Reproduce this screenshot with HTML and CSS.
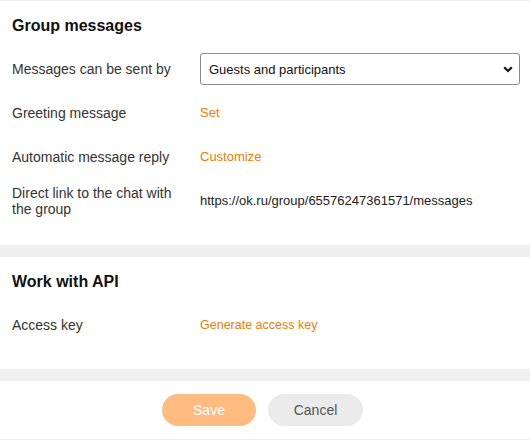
FILE: index.html
```
<!DOCTYPE html>
<html>
<head>
<meta charset="utf-8">
<link rel="stylesheet" href="styles.css">
</head>
<body>
<div class="page">
  <section class="card">
    <h2 class="title">Group messages</h2>
    <div class="rows">
      <div class="row">
        <div class="label">Messages can be sent by</div>
        <div class="value">
          <div class="select-wrap">
            <select class="select">
              <option>Guests and participants</option>
            </select>
            <svg class="chevron" width="10" height="7" viewBox="0 0 10 7"><path d="M1.2 1.2 L5 5 L8.8 1.2" fill="none" stroke="#111" stroke-width="2.2"/></svg>
          </div>
        </div>
      </div>
      <div class="row">
        <div class="label">Greeting message</div>
        <div class="value"><a class="link">Set</a></div>
      </div>
      <div class="row">
        <div class="label">Automatic message reply</div>
        <div class="value"><a class="link">Customize</a></div>
      </div>
      <div class="row">
        <div class="label">Direct link to the chat with the group</div>
        <div class="value url">https://ok.ru/group/65576247361571/messages</div>
      </div>
    </div>
  </section>
  <div class="band"></div>
  <section class="card">
    <h2 class="title">Work with API</h2>
    <div class="rows">
      <div class="row">
        <div class="label">Access key</div>
        <div class="value"><a class="link link-narrow">Generate access key</a></div>
      </div>
    </div>
  </section>
  <div class="band"></div>
  <footer class="footer">
    <button class="btn btn-save">Save</button>
    <button class="btn btn-cancel">Cancel</button>
  </footer>
</div>
</body>
</html>
```
FILE: styles.css
```
html, body {
  margin: 0;
  padding: 0;
  background: #fff;
}
body {
  font-family: "Liberation Sans", Arial, sans-serif;
  font-size: 13px;
  color: #333;
}
.page {
  width: 530px;
  border-top: 1px solid #efefef;
}
.card {
  padding: 15px 12px 28px 12px;
}
.title {
  margin: 0 0 17px 0;
  font-size: 16px;
  line-height: 20px;
  font-weight: bold;
  color: #111;
}
.rows {
  display: flex;
  flex-direction: column;
  gap: 12px;
}
.row {
  display: flex;
  align-items: center;
  min-height: 32px;
}
.label {
  width: 188px;
  flex: none;
  box-sizing: border-box;
  padding-right: 12px;
  font-size: 14px;
  line-height: 16px;
  color: #333;
}
.value {
  flex: 1;
  line-height: 16px;
}
.url {
  font-size: 13px;
  color: #222;
}
.link {
  color: #f07d00;
  cursor: pointer;
}
.link-narrow {
  font-size: 12.5px;
}
.select-wrap {
  position: relative;
  width: 320px;
}
.select {
  appearance: none;
  -webkit-appearance: none;
  display: block;
  width: 100%;
  height: 32px;
  margin: 0;
  box-sizing: border-box;
  border: 1px solid #8a8a8a;
  border-radius: 3px;
  background: #fff;
  padding: 0 0 0 8px;
  font-family: "Liberation Sans", Arial, sans-serif;
  font-size: 13px;
  color: #111;
}
.chevron {
  position: absolute;
  right: 7px;
  top: 13px;
  pointer-events: none;
}
.band {
  height: 12px;
  background: #efefef;
}
.footer {
  display: flex;
  justify-content: center;
  gap: 12px;
  padding: 13px 5px 13px 0;
  border-bottom: 1px solid #efefef;
}
.btn {
  height: 32px;
  width: 94px;
  border: none;
  border-radius: 16px;
  font-family: "Liberation Sans", Arial, sans-serif;
  font-size: 14px;
}
.btn-save {
  background: #ffbb80;
  color: #fff;
}
.btn-cancel {
  width: 95px;
  background: #ebebeb;
  color: #555;
}
```
